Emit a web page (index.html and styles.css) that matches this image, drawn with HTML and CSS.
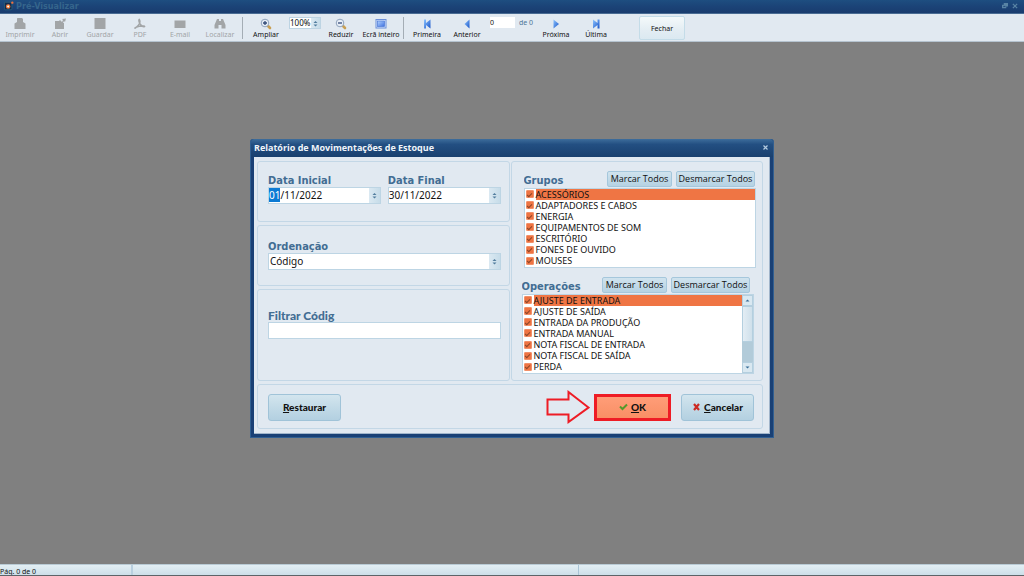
FILE: index.html
```html
<!DOCTYPE html>
<html lang="pt">
<head>
<meta charset="utf-8">
<title>Pré-Visualizar</title>
<link rel="stylesheet" href="styles.css">
</head>
<body>
<svg class="defs" aria-hidden="true">
  <defs>
    <linearGradient id="blue" x1="0" x2="1" y1="0" y2="1"><stop offset="0" stop-color="#8cc4ff"/><stop offset="1" stop-color="#1b55c8"/></linearGradient>
    <linearGradient id="screen" x1="0" x2="1" y1="0" y2="1"><stop offset="0" stop-color="#b4d4ff"/><stop offset="1" stop-color="#3e70df"/></linearGradient>
    <g id="lens"><path d="M7.500 7.500 10 10" stroke="#c9a054" stroke-width="2.600" stroke-linecap="round"/><circle cx="5" cy="5" r="3.800" fill="#e7eef7" stroke="#8fa3bc"/></g>
  </defs>
</svg>
<header class="titlebar">
  <svg class="logo" viewBox="0 0 12 12"><rect x=".5" y="1.500" width="9" height="9" rx="1" fill="#132a4c" stroke="#2b6480"/><circle cx="5" cy="6.500" r="2" fill="#fff" stroke="#f07a35" stroke-width="1.500"/><circle cx="10" cy="2" r="1.400" fill="#f0713c"/></svg>
  <h1 class="titlebar-text">Pré-Visualizar</h1>
  <button class="win-btn" aria-label="Restaurar janela"><svg viewBox="0 0 7 7"><path d="M2 0H7V4H5V6H0V2H2Z"/><path d="M1.500 4H4" stroke="#1b4377"/></svg></button>
  <button class="win-btn" aria-label="Fechar janela"><svg viewBox="0 0 7 7"><path d="M1 1 6 6M6 1 1 6" stroke="currentColor" stroke-width="1.500"/></svg></button>
</header>
<nav class="toolbar">
  <button class="tool" disabled><svg viewBox="0 0 12 12"><path d="M3.500 0H8L9 1V4L11.500 5.500V11H.5V5.500L3 4V.5Z"/></svg>Imprimir</button>
  <button class="tool" disabled><svg viewBox="0 0 12 12"><path d="M1 3H5L6 2 8 4 9 2 8 1 12 .5 11 4 10 3 9 5H10V11H1Z"/></svg>Abrir</button>
  <button class="tool" disabled><svg viewBox="0 0 12 12"><path d="M.5 0H11.500V11H.5Z"/></svg>Guardar</button>
  <button class="tool" disabled><svg viewBox="0 0 12 12"><path d="M5.300 1.500C7 4 6 6 1.500 10C0 11 1 8 10 8C12 8.500 9 10 6 6C5 4 4.500 2 5.300 1.500Z" fill="none" stroke="currentColor" stroke-width="1.500"/></svg>PDF</button>
  <button class="tool" disabled><svg viewBox="0 0 12 12"><path d="M.5 2.500H11.500V10H.5Z"/></svg>E-mail</button>
  <button class="tool" disabled><svg viewBox="0 0 12 12"><path d="M3 1H5V3H7V1H9L11.500 7V10.500H7.500V7H4.500V10.500H.5V7Z"/></svg>Localizar</button>
  <span class="divider"></span>
  <button class="tool"><svg viewBox="0 0 12 12"><use href="#lens"/><path d="M3 5H7M5 3V7" stroke="#334b77" stroke-width="1.300"/></svg>Ampliar</button>
  <span class="zoom-box"><input class="zoom-input" aria-label="Zoom" value="100%"><button class="spin" aria-label="Alterar zoom"><svg viewBox="0 0 5 7"><path d="M.5 3 2.500 1 4.500 3ZM.5 4.500 2.500 6.500 4.500 4.500Z"/></svg></button></span>
  <button class="tool"><svg viewBox="0 0 12 12"><use href="#lens"/><path d="M3 5H7" stroke="#334b77" stroke-width="1.300"/></svg>Reduzir</button>
  <button class="tool"><svg viewBox="0 0 12 12"><rect x="1" y="1.500" width="10" height="8.500" fill="#dce9ff" stroke="#6b8fd9"/><rect x="2.500" y="3" width="7" height="5.500" fill="url(#screen)" stroke="#4c78d4" stroke-width=".7"/></svg>Ecrã inteiro</button>
  <span class="divider"></span>
  <button class="tool"><svg viewBox="0 0 12 12"><path d="M3 1.500H5V5L9.500 1.500V10.500L5 7V10.500H3Z" fill="url(#blue)"/></svg>Primeira</button>
  <button class="tool"><svg viewBox="0 0 12 12"><path d="M8.500 1.500V10.500L3.500 6Z" fill="url(#blue)"/></svg>Anterior</button>
  <span class="page-box"><input class="page-input" aria-label="Página" value="0"><span class="page-total">de 0</span></span>
  <button class="tool"><svg viewBox="0 0 12 12"><path d="M3.500 1.500V10.500L9 6Z" fill="url(#blue)"/></svg>Próxima</button>
  <button class="tool"><svg viewBox="0 0 12 12"><path d="M9.500 1.500H7.500V5L3 1.500V10.500L7.500 7V10.500H9.500Z" fill="url(#blue)"/></svg>Última</button>
  <button class="close-tool">Fechar</button>
</nav>
<main class="workspace">
  <section class="dialog" role="dialog" aria-labelledby="dialog-title">
    <header class="dialog-head">
      <h2 class="dialog-title" id="dialog-title">Relatório de Movimentações de Estoque</h2>
      <button class="dialog-close" aria-label="Fechar"><svg viewBox="0 0 7 7"><path d="M1.500 1.500 5.500 5.500M5.500 1.500 1.500 5.500" stroke="currentColor" stroke-width="1.200"/></svg></button>
    </header>
    <form class="dialog-body">
      <div class="columns">
        <div class="filters">
          <div class="panel dates">
            <div class="field">
              <label class="label" for="start">Data Inicial</label>
              <div class="control"><span class="date" id="start" role="textbox" tabindex="0"><mark class="picked">01</mark>/11/2022</span><button type="button" class="spin" aria-label="Escolher data inicial"><svg viewBox="0 0 5 7"><path d="M.5 3 2.500 1 4.500 3ZM.5 4.500 2.500 6.500 4.500 4.500Z"/></svg></button></div>
            </div>
            <div class="field">
              <label class="label" for="end">Data Final</label>
              <div class="control"><input class="date" id="end" value="30/11/2022"><button type="button" class="spin" aria-label="Escolher data final"><svg viewBox="0 0 5 7"><path d="M.5 3 2.500 1 4.500 3ZM.5 4.500 2.500 6.500 4.500 4.500Z"/></svg></button></div>
            </div>
          </div>
          <div class="panel order">
            <label class="label" for="order">Ordenação</label>
            <div class="control"><select class="date" id="order"><option>Código</option></select><span class="spin"><svg viewBox="0 0 5 7"><path d="M.5 3 2.500 1 4.500 3ZM.5 4.500 2.500 6.500 4.500 4.500Z"/></svg></span></div>
          </div>
          <div class="panel code">
            <label class="label label-code" for="code">Filtrar Códig</label>
            <div class="control"><input class="date" id="code"></div>
          </div>
        </div>
        <div class="panel lists">
          <div class="list-group groups">
            <div class="list-head"><h3 class="label list-label">Grupos</h3><button type="button" class="small-btn">Marcar Todos</button><button type="button" class="small-btn wide">Desmarcar Todos</button></div>
            <div class="list-box"><div class="rows">
              <label class="row selected"><input type="checkbox" class="check" checked><span class="row-text">ACESSÓRIOS</span></label>
              <label class="row"><input type="checkbox" class="check" checked><span class="row-text">ADAPTADORES E CABOS</span></label>
              <label class="row"><input type="checkbox" class="check" checked><span class="row-text">ENERGIA</span></label>
              <label class="row"><input type="checkbox" class="check" checked><span class="row-text">EQUIPAMENTOS DE SOM</span></label>
              <label class="row"><input type="checkbox" class="check" checked><span class="row-text">ESCRITÓRIO</span></label>
              <label class="row"><input type="checkbox" class="check" checked><span class="row-text">FONES DE OUVIDO</span></label>
              <label class="row"><input type="checkbox" class="check" checked><span class="row-text">MOUSES</span></label>
            </div></div>
          </div>
          <div class="list-group operations">
            <div class="list-head"><h3 class="label list-label">Operações</h3><button type="button" class="small-btn">Marcar Todos</button><button type="button" class="small-btn wide">Desmarcar Todos</button></div>
            <div class="list-box"><div class="rows">
              <label class="row selected"><input type="checkbox" class="check" checked><span class="row-text">AJUSTE DE ENTRADA</span></label>
              <label class="row"><input type="checkbox" class="check" checked><span class="row-text">AJUSTE DE SAÍDA</span></label>
              <label class="row"><input type="checkbox" class="check" checked><span class="row-text">ENTRADA DA PRODUÇÃO</span></label>
              <label class="row"><input type="checkbox" class="check" checked><span class="row-text">ENTRADA MANUAL</span></label>
              <label class="row"><input type="checkbox" class="check" checked><span class="row-text">NOTA FISCAL DE ENTRADA</span></label>
              <label class="row"><input type="checkbox" class="check" checked><span class="row-text">NOTA FISCAL DE SAÍDA</span></label>
              <label class="row"><input type="checkbox" class="check" checked><span class="row-text">PERDA</span></label>
            </div>
            <div class="scroll">
              <button type="button" class="scroll-btn" aria-label="Subir"><svg viewBox="0 0 5 5"><path d="M.5 3.500 2.500 1.500 4.500 3.500Z"/></svg></button>
              <div class="thumb"></div>
              <button type="button" class="scroll-btn scroll-down" aria-label="Descer"><svg viewBox="0 0 5 5"><path d="M.5 1.500 2.500 3.500 4.500 1.500Z"/></svg></button>
            </div></div>
          </div>
        </div>
      </div>
      <footer class="panel actions">
        <button type="button" class="big-btn"><span><u>R</u>estaurar</span></button>
        <svg class="arrow" viewBox="0 0 44 34"><path d="M1.500 9.500H22.500V2L42.500 17.500 22.500 32V24.500H1.500Z" fill="none" stroke="#ee1c25" stroke-width="2"/></svg>
        <button type="button" class="ok-btn"><svg viewBox="0 0 9 8"><path d="M1 3.500 3.500 6 8 1.500" fill="none" stroke="#55982b" stroke-width="2"/></svg><span><u>O</u>K</span></button>
        <button type="button" class="big-btn"><svg viewBox="0 0 8 8"><path d="M1.500 1 6.500 7M6.500 1 1.500 7" stroke="#cc2a22" stroke-width="2.200"/></svg><span><u>C</u>ancelar</span></button>
      </footer>
    </form>
  </section>
</main>
<footer class="status"><span class="status-page">Pág. 0 de 0</span><span class="status-mid"></span><span class="status-end"></span></footer>
</body>
</html>
```

FILE: styles.css
```css
* { box-sizing: border-box; }
body {
  margin: 0;
  min-height: 100vh;
  display: flex;
  flex-direction: column;
  background: #808080;
  font-family: "Noto Sans", sans-serif;
  font-size: 10px;
  color: #111;
}
button, input, select { font: inherit; color: inherit; margin: 0; padding: 0; border: 0; background: none; border-radius: 0; outline: 0; min-width: 0; }
h1, h2, h3 { margin: 0; }
svg { display: block; flex: none; }
.defs { position: absolute; width: 0; height: 0; }

.titlebar {
  display: flex;
  align-items: center;
  height: 14px;
  padding: 0 4px 1px;
  background: linear-gradient(#1e4e80, #1b4377 50%, #193c6e);
  border-bottom: 1px solid #486b93;
}
.logo { width: 10px; height: 10px; margin-right: 2px; }
.titlebar-text { flex: 1; font: bold 9px/12px "DejaVu Sans Condensed", "DejaVu Sans", sans-serif; color: #35658c; }
.win-btn { width: 10px; padding-left: 2px; color: #5884a5; fill: currentColor; }
.win-btn svg { width: 6px; height: 6px; }

.toolbar {
  display: flex;
  height: 28px;
  padding-top: 2px;
  background: #e1e9f1;
  border-bottom: 1px solid #b5c3cf;
}
.tool {
  width: 40px;
  height: 23px;
  display: flex;
  flex-direction: column;
  align-items: center;
  justify-content: flex-end;
  font-size: 7px;
  line-height: 9px;
  white-space: nowrap;
}
.tool svg { width: 12px; height: 12px; fill: currentColor; }
.tool:disabled { color: #a2a5a7; }
.divider { width: 1px; height: 22px; margin: 1px 3px 0 2px; background: #a4adb5; }
.zoom-box { display: flex; width: 32px; height: 12px; margin: 1px 0 0 3px; border: 1px solid #bdd4e3; background: #fff; }
.zoom-input { flex: 1; font-size: 8px; line-height: 10px; }
.page-box { display: flex; gap: 4px; width: 46px; height: 11px; margin: 1px 0 0 3px; font-size: 7px; line-height: 11px; white-space: nowrap; }
.page-input { width: 25px; background: #fff; }
.page-total { color: #4d7597; }
.close-tool { width: 46px; height: 24px; margin-left: 23px; border: 1px solid #c4dce8; border-radius: 2px; background: linear-gradient(#f4f9fa, #e3edf3 60%, #dbe9f1); font-size: 7px; }
.spin { display: flex; align-items: center; justify-content: center; width: 11px; background: linear-gradient(90deg, #dbe9f2, #c6dce9); fill: #517c9d; }
.zoom-box .spin { width: 9px; }
.spin svg { width: 5px; height: 7px; }

.workspace { flex: 1; display: grid; place-items: center; padding-bottom: 30px; }
.dialog { width: 524px; padding: 0 4px 3px; background: #194075; border: 1px solid #315f91; border-width: 0 1px 1px; border-radius: 3px 3px 0 0; }
.dialog-head { display: flex; align-items: center; height: 18px; margin: 0 -4px; padding: 0 4px 0 3px; background: linear-gradient(#3d6d9b, #234f82 30%, #19406f); border-radius: 3px 3px 0 0; }
.dialog-title { flex: 1; font: bold 9px/14px "Open Sans", sans-serif; color: #f0f5fa; }
.dialog-close { color: #b4cbe0; }
.dialog-close svg { width: 7px; height: 7px; }
.dialog-body { display: grid; gap: 3px; margin: 0 -1px; padding: 4px 6px 4px 3px; background: #e1e9f1; border: 1px solid #a1b5cb; border-width: 0 1px 1px 0; }
.columns { display: grid; grid-template-columns: 1fr 1fr; gap: 1px; }
.filters { display: grid; grid-template-rows: 61px 61px 92px; gap: 3px; }
.panel { border: 1px solid #c3d7e6; border-radius: 3px; padding: 0 8px 0 10px; min-width: 0; }
.dates { display: grid; grid-template-columns: 1fr 1fr; gap: 7px; padding-top: 13px; }
.order { padding-top: 15px; }
.code { padding-top: 20px; }
.field { min-width: 0; }
.label { display: block; height: 12px; overflow: hidden; font: bold 11px/12px "DejaVu Sans Condensed", "DejaVu Sans", sans-serif; color: #426d93; white-space: nowrap; }
.label-code { font: 900 12px/12px Lato, sans-serif; }
.control { display: flex; height: 17px; border: 1px solid #bdd5e4; background: #fff; }
.date { flex: 1; width: 0; appearance: none; padding-left: 1px; font-size: 10px; line-height: 15px; }
#start, #end { padding-left: 0; }
.picked { background: #0b7ad4; color: #fff; }

.lists { display: flex; flex-direction: column; justify-content: space-between; padding: 9px 6px 6px 10px; }
.groups { padding-left: 2px; }
.operations { padding-right: 2px; }
.list-head { display: flex; align-items: flex-start; gap: 4px; height: 17px; padding-right: 1px; }
.operations .list-head { padding-right: 4px; }
.list-label { flex: 1; margin-top: 4px; }
.small-btn { width: 65px; height: 16px; border: 1px solid #a5c7dc; border-radius: 2px; background: linear-gradient(#d0e3ee, #b5d2e3); font: 9px/14px "Open Sans", sans-serif; white-space: nowrap; }
.small-btn.wide { width: 79px; }
.list-box { display: flex; height: 80px; border: 1px solid #bdd5e4; background: #fff; overflow: hidden; }
.rows { flex: 1; display: grid; grid-template-rows: repeat(7, 1fr); }
.row { display: flex; align-items: center; gap: 2px; padding-left: 1px; font-size: 9px; line-height: 11px; }
.check { appearance: none; width: 8px; height: 8px; display: grid; place-items: center; background: #ee7443; border: 1px solid #f29069; border-radius: 1px; }
.check::before { content: ""; width: 4px; height: 2px; border: solid #8a4629; border-width: 0 0 1px 1px; transform: rotate(-45deg); }
.row-text { flex: 1; }
.selected .row-text { background: #ef7544; }
.scroll { display: flex; flex-direction: column; width: 11px; background: #b2cbd9; }
.scroll-btn { height: 11px; display: grid; place-items: center; background: #d9e8f1; border: 1px solid #b4cfdf; border-radius: 1px; fill: #386d97; }
.scroll-btn svg { width: 5px; height: 5px; }
.thumb { height: 36px; background: linear-gradient(90deg, #e3edf4, #cfe0eb); border: 1px solid #b4cfdf; border-radius: 1px; }
.scroll-down { margin-top: auto; }

.actions { display: flex; align-items: center; height: 45px; padding-top: 2px; }
.big-btn, .ok-btn { display: flex; align-items: center; justify-content: center; gap: 3px; width: 73px; height: 27px; border: 1px solid #a0c3d8; border-radius: 3px; background: linear-gradient(#d3e5ee, #c2dae7 50%, #b3d0e1); font: 900 10px/14px Lato, sans-serif; }
.big-btn svg, .ok-btn svg { width: 9px; height: 8px; }
.arrow { width: 44px; height: 34px; margin-left: auto; }
.ok-btn { width: 77px; margin: 0 10px 0 4px; border: 3px solid #ee1c25; border-radius: 0; background: linear-gradient(#ff9d78, #f98f65); }

.status { display: flex; height: 12px; background: linear-gradient(#e3eff4, #cddfe9); border-top: 1px solid #b9cbd5; border-bottom: 1px solid #5d6468; font-size: 7px; line-height: 13px; overflow: hidden; }
.status-page { width: 13%; border-right: 2px solid #b9d0e0; }
.status-mid { width: 43.5%; border-right: 1px solid #a9c4d6; }
.status-end { flex: 1; }
```
